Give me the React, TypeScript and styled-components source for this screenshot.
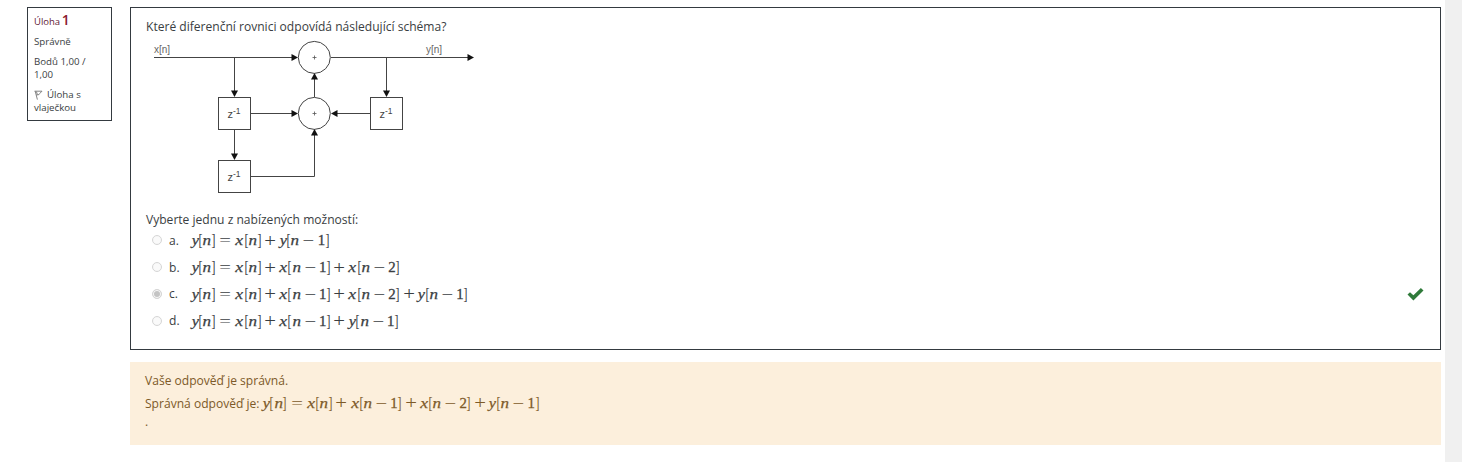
import React from "react";
import styled, { createGlobalStyle } from "styled-components";

const Global = createGlobalStyle`
  * { box-sizing: border-box; }
  body { margin: 0; background: #fff; overflow: hidden; }
`;

const Page = styled.div`
  display: flex;
  height: 462px;
  font-family: "Open Sans", sans-serif;
  font-size: 12.07px;
  line-height: 18px;
  color: #3a3e42;
`;
const Question = styled.main`
  flex: 1;
  display: flex;
  align-items: flex-start;
  gap: 18px;
  padding: 7px 4px 0 27px;
`;
const ScrollTrack = styled.div`
  width: 17px;
  background: #f0f0f0;
`;
const Info = styled.aside`
  width: 85px;
  height: 114px;
  border: 1px solid #343a40;
  padding: 3px 6px 0;
  font-size: 9.7px;
  line-height: 13px;
`;
const Title = styled.h3`
  margin: 0 0 4px;
  font-size: 9.5px;
  line-height: 20px;
  height: 20px;
  font-weight: 400;
  color: #5f2036;
  white-space: nowrap;
`;
const Num = styled.span`
  font-size: 14px;
  line-height: 18px;
  font-weight: 600;
  margin-left: -1px;
  color: #8a1a30;
`;
const InfoLine = styled.div`
  margin-bottom: 7px;
`;
const Flag = styled.svg`
  width: 9px;
  height: 10px;
  margin-right: 4px;
  vertical-align: -2px;
`;
const Content = styled.div`
  flex: 1;
`;
const Formulation = styled.section`
  height: 343px;
  border: 1px solid #343a40;
  padding: 10px 15px 0;
`;
const Prompt = styled.div`
  height: 18px;
  white-space: nowrap;
`;
const Diagram = styled.svg`
  display: block;
  width: 330px;
  height: 160px;
  margin: 1px 0 14px;
`;
const Answers = styled.div`
  display: flex;
  flex-direction: column;
`;
const Row = styled.div`
  display: flex;
  align-items: center;
  height: 26.8px;
  padding: 0 1px 4px 6px;
`;
const Radio = styled.span<{ $on?: boolean }>`
  width: 10px;
  height: 10px;
  border-radius: 50%;
  border: 1px solid #d6d6d6;
  background: ${(p) => (p.$on ? "#c4c4c4" : "#fafafa")};
  box-shadow: inset 0 0 0 1px #f8f8f8;
`;
const Letter = styled.span`
  width: 22.3px;
  margin-left: 7px;
  padding-top: 1px;
`;
const Check = styled.svg`
  width: 17px;
  height: 14px;
  margin-left: auto;
`;
const Feedback = styled.section`
  height: 83px;
  margin-top: 12px;
  padding: 10px 15px 0;
  background: #fcefdc;
  color: #7d5a29;
`;
const FeedbackLine = styled.div<{ $h: number }>`
  height: ${(p) => p.$h}px;
  line-height: ${(p) => p.$h}px;
  white-space: nowrap;
`;
const MathText = styled.span`
  display: inline-flex;
  font-family: "Liberation Serif", serif;
  font-size: 14.85px;
  line-height: 18px;
  white-space: pre;
`;
const Cell = styled.span<{ $w: number; $pad: number }>`
  display: flex;
  justify-content: center;
  width: ${(p) => p.$w}em;
  margin: 0 ${(p) => p.$pad}em;
`;
const Glyph = styled.span<{ $sx: number; $sy: number; $stroke: number; $it: boolean }>`
  display: inline-block;
  font-style: ${(p) => (p.$it ? "italic" : "normal")};
  transform: scale(${(p) => p.$sx}, ${(p) => p.$sy});
  -webkit-text-stroke: ${(p) => p.$stroke}px currentColor;
`;

// advance width, side space, horizontal and vertical stretch (em), stroke (px)
const METRICS: Record<string, [number, number, number, number, number]> = {
  x: [0.572, 0, 1.2, 1, 0.25],
  y: [0.49, 0, 1.1, 1, 0.25],
  n: [0.6, 0, 1.15, 1, 0.25],
  "[": [0.278, 0, 0.8, 1.15, 0],
  "]": [0.278, 0, 0.8, 1.15, 0],
  "=": [0.778, 0.278, 1.4, 1, 0],
  "+": [0.778, 0.222, 1.4, 1.3, 0],
  "−": [0.778, 0.222, 1.4, 1, 0],
  "1": [0.5, 0, 1, 1, 0.3],
  "2": [0.5, 0, 1, 1, 0.3],
};

function Formula({ text }: { text: string }) {
  return (
    <MathText>
      {[...text].map((c, i) => {
        const [w, pad, sx, sy, stroke] = METRICS[c];
        return (
          <Cell key={i} $w={w} $pad={pad}>
            <Glyph $sx={sx} $sy={sy} $stroke={stroke} $it={/[xyn]/.test(c)}>{c}</Glyph>
          </Cell>
        );
      })}
    </MathText>
  );
}

const OPTIONS = [
  { id: "a.", text: "y[n]=x[n]+y[n−1]" },
  { id: "b.", text: "y[n]=x[n]+x[n−1]+x[n−2]" },
  { id: "c.", text: "y[n]=x[n]+x[n−1]+x[n−2]+y[n−1]", on: true },
  { id: "d.", text: "y[n]=x[n]+x[n−1]+y[n−1]" },
];

const ARROWS: [number, number, number][] = [
  [152, 20, 0], [328, 20, 0], [152, 76, 0], [185, 76, 180],
  [88.5, 60, 90], [240.5, 60, 90], [88.5, 123, 90],
  [168.5, 36, -90], [168.5, 92, -90],
];
const BOXES = [[72.5, 60.5], [224.5, 60.5], [72.5, 123.5]];

function Scheme() {
  return (
    <Diagram viewBox="0 0 330 160" fontFamily="Liberation Sans, Arial, sans-serif" fill="none" stroke="#444" strokeWidth="1">
      <path d="M8 20.5H150M185 20.5H326M88.5 20.5V58M240.5 20.5V58M168.5 60V40M105 76.5H150M224 76.5H187M88.5 93V120M105 139.5H168.5V95" />
      {BOXES.map(([x, y], i) => (
        <g key={i}>
          <rect x={x} y={y} width="32" height="32" />
          <text x={x + 9} y={y + 20} fontSize="11" fill="#444" stroke="none">
            z<tspan dy="-4" fontSize="8.5">-1</tspan>
          </text>
        </g>
      ))}
      {[20, 76].map((y) => (
        <g key={y}>
          <circle cx="168.3" cy={y + 0.4} r="16" />
          <path d={`M166.5 ${y + 0.5}h4m-2-2v4`} stroke="#555" strokeWidth="0.8" />
        </g>
      ))}
      <g fill="#111" stroke="none">
        {ARROWS.map(([x, y, r], i) => (
          <path key={i} d="M0 0L-6.5 3.5V-3.5Z" transform={`translate(${x} ${r % 180 ? y : y + 0.5}) rotate(${r})`} />
        ))}
      </g>
      <g fontSize="10" fill="#666" stroke="none">
        <text x="8" y="16">x[n]</text>
        <text x="280" y="16">y[n]</text>
      </g>
    </Diagram>
  );
}

export default function App() {
  return (
    <>
      <Global />
      <Page>
        <Question>
          <Info>
            <Title>Úloha <Num>1</Num></Title>
            <InfoLine>Správně</InfoLine>
            <InfoLine>Bodů 1,00 / 1,00</InfoLine>
            <InfoLine>
              <Flag viewBox="0 0 9 10" fill="none" stroke="#777" strokeWidth="0.9">
                <path d="M.5 1.2H8L5.8 3.4 5 4.6 2.2 5M1.2 1.2L3.4 9.6M2.4 1.6L3.4 4.6" />
              </Flag>
              Úloha s vlaječkou
            </InfoLine>
          </Info>
          <Content>
            <Formulation>
              <Prompt>Které diferenční rovnici odpovídá následující schéma?</Prompt>
              <Scheme />
              <Prompt>Vyberte jednu z nabízených možností:</Prompt>
              <Answers>
                {OPTIONS.map((o) => (
                  <Row key={o.id}>
                    <Radio $on={o.on} />
                    <Letter>{o.id}</Letter>
                    <Formula text={o.text} />
                    {o.on && (
                      <Check viewBox="0 0 17 14">
                        <path d="M.5 7.6L3 5.2L6.4 8.3L13.9 1L16.5 3.5L6.4 13.6Z" fill="#2f7a3a" />
                      </Check>
                    )}
                  </Row>
                ))}
              </Answers>
            </Formulation>
            <Feedback>
              <FeedbackLine $h={18}>Vaše odpověď je správná.</FeedbackLine>
              <FeedbackLine $h={27}>
                Správná odpověď je: <Formula text={OPTIONS[2].text} />
              </FeedbackLine>
              <FeedbackLine $h={9}>.</FeedbackLine>
            </Feedback>
          </Content>
        </Question>
        <ScrollTrack />
      </Page>
    </>
  );
}
